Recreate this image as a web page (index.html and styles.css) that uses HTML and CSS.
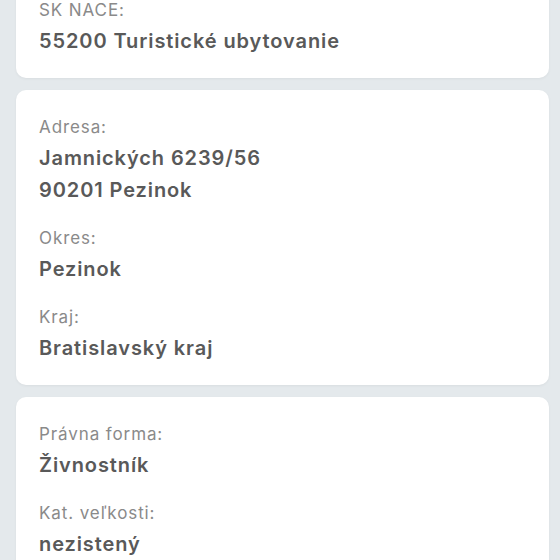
FILE: index.html
```html
<!DOCTYPE html>
<html lang="sk">
<head>
    <meta charset="UTF-8">
    <meta name="viewport" content="width=device-width, initial-scale=1.0">
    <title>Detail firmy</title>
    <link rel="stylesheet" href="styles.css">
</head>
<body>
    <div class="list">
        <div class="card">
            <div class="field">
                <div class="label">SK NACE:</div>
                <div class="value">55200 Turistické ubytovanie</div>
            </div>
        </div>
        <div class="card">
            <div class="field">
                <div class="label">Adresa:</div>
                <div class="value">Jamnických 6239/56<br>90201 Pezinok</div>
            </div>
            <div class="field">
                <div class="label">Okres:</div>
                <div class="value">Pezinok</div>
            </div>
            <div class="field">
                <div class="label">Kraj:</div>
                <div class="value">Bratislavský kraj</div>
            </div>
        </div>
        <div class="card">
            <div class="field">
                <div class="label">Právna forma:</div>
                <div class="value">Živnostník</div>
            </div>
            <div class="field">
                <div class="label">Kat. veľkosti:</div>
                <div class="value">nezistený</div>
            </div>
        </div>
    </div>
</body>
</html>
```

FILE: styles.css
```css
body {
    margin: 0;
    background-color: #e4e9ec;
    font-family: Inter, "Noto Sans", sans-serif;
    overflow: hidden;
}
.list {
    display: flex;
    flex-direction: column;
    gap: 12px;
    margin: -27px 11px 0 16px;
}
.card {
    background-color: #fff;
    border-radius: 10px;
    padding: 24px 23px 21px;
    display: flex;
    flex-direction: column;
    gap: 19px;
    box-shadow: 0 1px 3px rgba(0, 0, 0, 0.05);
}
.label {
    font-size: 17px;
    line-height: 26px;
    letter-spacing: 0.9px;
    color: #8a8a8a;
    margin-bottom: 2px;
}
.value {
    font-size: 20px;
    line-height: 32px;
    letter-spacing: 0.9px;
    font-weight: 600;
    color: #595959;
}
```
